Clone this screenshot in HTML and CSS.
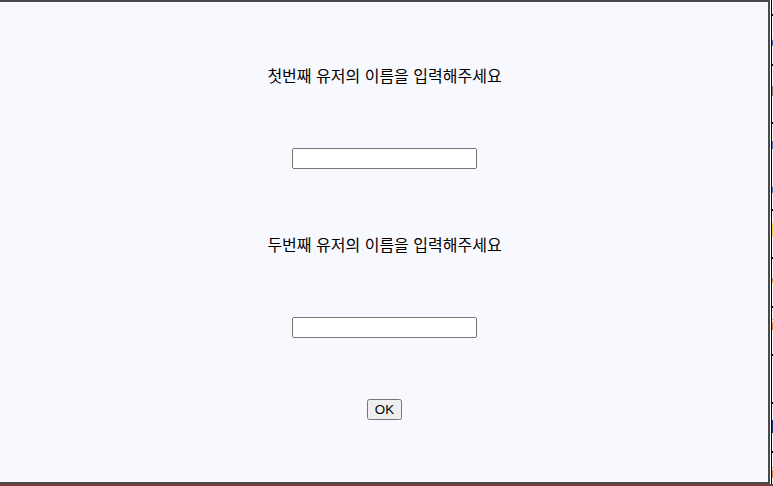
FILE: index.html
```html
<!DOCTYPE html>
<html lang="ko">
<head>
<meta charset="utf-8">
<link rel="stylesheet" href="styles.css">
</head>
<body>
<div class="page">
  <div class="page-strip">
    <span class="frag tick" style="top:14px"></span>
    <span class="frag glyph blue" style="top:36px">C</span>
    <span class="frag tick" style="top:64px"></span>
    <span class="frag glyph teal" style="top:84px">L</span>
    <span class="frag tick" style="top:122px"></span>
    <span class="frag glyph blue" style="top:137px">r</span>
    <span class="frag glyph blue" style="top:182px">c</span>
    <span class="frag tick" style="top:209px"></span>
    <span class="frag glyph gold" style="top:222px">|</span>
    <span class="frag tick" style="top:257px"></span>
    <span class="frag glyph orange" style="top:276px">V</span>
    <span class="frag tick" style="top:306px"></span>
    <span class="frag glyph orange" style="top:318px">i</span>
    <span class="frag tick" style="top:354px"></span>
    <span class="frag tick" style="top:402px"></span>
    <span class="frag block" style="top:420px"></span>
    <span class="frag tick" style="top:451px"></span>
    <span class="frag glyph orange" style="top:466px">i</span>
  </div>
  <div class="page-bottom"></div>
</div>

<div class="dialog">
  <p class="prompt">첫번째 유저의 이름을 입력해주세요</p>
  <input class="name-input" type="text">
  <p class="prompt second">두번째 유저의 이름을 입력해주세요</p>
  <input class="name-input" type="text">
  <button class="ok-btn" type="button">OK</button>
</div>
</body>
</html>
```

FILE: styles.css
```css
html, body {
  margin: 0;
  padding: 0;
  width: 773px;
  height: 486px;
  overflow: hidden;
  background: #ffffff;
}

.page {
  position: relative;
  width: 773px;
  height: 486px;
}

.page-strip {
  position: absolute;
  left: 771px;
  top: 0;
  width: 2px;
  height: 486px;
  border-left: 1px solid #000;
  overflow: hidden;
}

.frag {
  position: absolute;
  left: 0;
}

.tick {
  width: 3px;
  height: 2px;
  background: #000;
}

.block {
  width: 3px;
  height: 13px;
  background: #1c3a78;
}

.glyph {
  font-family: "Liberation Sans", sans-serif;
  font-size: 14px;
  line-height: 14px;
  left: -1px;
}

.blue { color: #1f5fa8; }
.teal { color: #2b6f7a; }
.gold { color: #e6c24a; }
.orange { color: #c87a1e; }

.page-bottom {
  position: absolute;
  left: 0;
  top: 484px;
  width: 773px;
  height: 2px;
  background: #7a3a3e;
}

.dialog {
  position: absolute;
  left: -2px;
  top: 0;
  width: 772px;
  height: 484px;
  box-sizing: border-box;
  border: 2px solid #4a4a4a;
  background: #f8f8ff;
  display: flex;
  flex-direction: column;
  align-items: center;
  padding-top: 63px;
  padding-left: 1px;
}

.prompt {
  margin: 0;
  font-family: "Noto Sans CJK KR", "Noto Sans", sans-serif;
  font-size: 16px;
  line-height: 20px;
  color: #000000;
}

.prompt.second {
  margin-top: 65px;
}

.name-input {
  margin-top: 63px;
  width: 185px;
  height: 21px;
  box-sizing: border-box;
  font-family: "Liberation Sans", sans-serif;
  font-size: 13.33px;
}

.ok-btn {
  margin-top: 61px;
  font-family: "Liberation Sans", sans-serif;
  font-size: 13.33px;
  height: 21px;
}
```
